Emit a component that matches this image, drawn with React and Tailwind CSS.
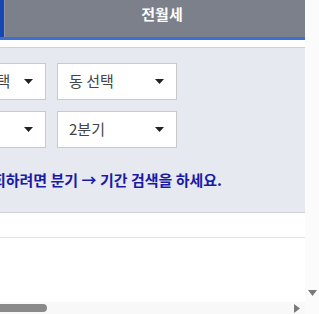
import React from 'react';

// Small down caret used in the select boxes
function Caret({ className = '' }) {
  return (
    <svg width="9" height="5" viewBox="0 0 9 5" className={className}>
      <path d="M0 0 L9 0 L4.5 5 Z" fill="#222" />
    </svg>
  );
}

function Select({ label }) {
  return (
    <div className="h-[37px] border border-[#c9c9c9] bg-white flex items-center justify-between pl-[11px] pr-[12px]">
      <span className="text-[15px] text-[#444] whitespace-nowrap">{label}</span>
      <Caret />
    </div>
  );
}

export default function App() {
  return (
    <div
      className="w-[319px] h-[314px] flex flex-col bg-white overflow-hidden"
      style={{ fontFamily: '"Noto Sans CJK KR", "Noto Sans", sans-serif' }}
    >
      <div className="flex flex-1 min-h-0">
        {/* page viewport, scrolled to the right */}
        <div className="w-[305px] overflow-hidden">
          <div className="ml-[-221px] w-[540px]">
            {/* tabs */}
            <div className="flex h-[37px]">
              <div className="w-[226px] bg-[#1447b4] border-r border-[#8d95a8] flex justify-center pt-[4px] text-white font-bold text-[15px] leading-[20px]">
                매매
              </div>
              <div className="w-[314px] bg-[#7c808b] flex justify-center pt-[4px] text-white font-bold text-[15px] leading-[20px]">
                전월세
              </div>
            </div>
            <div className="h-[3px] bg-[#3c6fd6]" />

            {/* search panel */}
            <div className="mt-[7px] h-[166px] border-y border-[#cdd1d8] bg-[#e6e9ef] pt-[15px] pl-[16px]">
              <div className="grid grid-cols-[120px_120px_120px] gap-x-[11px] gap-y-[11px]">
                <Select label="시도 선택" />
                <Select label="시군구 선택" />
                <Select label="동 선택" />
                <Select label="2024년" />
                <Select label="1분기" />
                <Select label="2분기" />
              </div>
              <div className="w-[427px] mt-[22px] flex justify-end">
                <p className="text-[15px] leading-[20px] font-bold text-[#1a1aa6] whitespace-nowrap">
                  여러 분기를 조회하려면 분기 → 기간 검색을 하세요.
                </p>
              </div>
            </div>

            <div className="mt-[24px] border-t border-[#e4e4e4]" />
          </div>
        </div>

        {/* vertical scrollbar */}
        <div className="w-[14px] bg-[#fbfbfb] flex flex-col justify-end items-center pb-[6px]">
          <svg width="9" height="6" viewBox="0 0 9 6">
            <path d="M0 0 L9 0 L4.5 6 Z" fill="#7a7a7a" />
          </svg>
        </div>
      </div>

      {/* horizontal scrollbar */}
      <div className="h-[12px] flex">
        <div className="w-[305px] bg-[#f8f8f8] flex items-center justify-between pr-[5px]">
          <div className="w-[47px] h-[8px] bg-[#8a8a8a] rounded-r-full" />
          <svg width="6" height="9" viewBox="0 0 6 9">
            <path d="M0 0 L6 4.5 L0 9 Z" fill="#7a7a7a" />
          </svg>
        </div>
        <div className="w-[14px] bg-[#fbfbfb]" />
      </div>
    </div>
  );
}
